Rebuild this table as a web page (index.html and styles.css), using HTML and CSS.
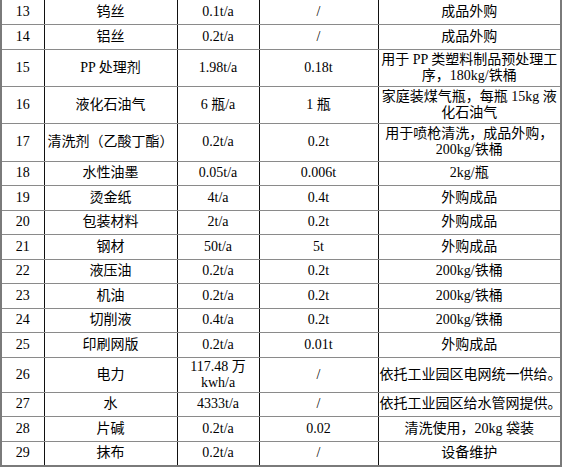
FILE: index.html
```html
<!DOCTYPE html>
<html lang="zh">
<head>
<meta charset="utf-8">
<link rel="stylesheet" href="styles.css">
</head>
<body>
<table class="tbl">
<colgroup>
<col class="c1"><col class="c2"><col class="c3"><col class="c4"><col class="c5">
</colgroup>
<tbody>
<tr class="r"><td>13</td><td>钨丝</td><td>0.1t/a</td><td>/</td><td>成品外购</td></tr>
<tr class="r"><td>14</td><td>铝丝</td><td>0.2t/a</td><td>/</td><td>成品外购</td></tr>
<tr><td>15</td><td>PP 处理剂</td><td>1.98t/a</td><td>0.18t</td><td>用于 PP 类塑料制品预处理工序，180kg/铁桶</td></tr>
<tr><td>16</td><td>液化石油气</td><td>6 瓶/a</td><td>1 瓶</td><td>家庭装煤气瓶，每瓶 15kg 液化石油气</td></tr>
<tr class="t"><td>17</td><td>清洗剂（乙酸丁酯）</td><td>0.2t/a</td><td>0.2t</td><td>用于喷枪清洗，成品外购，200kg/铁桶</td></tr>
<tr class="r"><td>18</td><td>水性油墨</td><td>0.05t/a</td><td>0.006t</td><td>2kg/瓶</td></tr>
<tr class="r"><td>19</td><td>烫金纸</td><td>4t/a</td><td>0.4t</td><td>外购成品</td></tr>
<tr class="r"><td>20</td><td>包装材料</td><td>2t/a</td><td>0.2t</td><td>外购成品</td></tr>
<tr class="r"><td>21</td><td>钢材</td><td>50t/a</td><td>5t</td><td>外购成品</td></tr>
<tr class="r"><td>22</td><td>液压油</td><td>0.2t/a</td><td>0.2t</td><td>200kg/铁桶</td></tr>
<tr class="r"><td>23</td><td>机油</td><td>0.2t/a</td><td>0.2t</td><td>200kg/铁桶</td></tr>
<tr class="r"><td>24</td><td>切削液</td><td>0.4t/a</td><td>0.2t</td><td>200kg/铁桶</td></tr>
<tr class="r"><td>25</td><td>印刷网版</td><td>0.2t/a</td><td>0.01t</td><td>外购成品</td></tr>
<tr class="p"><td>26</td><td>电力</td><td>117.48 万 kwh/a</td><td>/</td><td class="nw">依托工业园区电网统一供给。</td></tr>
<tr class="r"><td>27</td><td>水</td><td>4333t/a</td><td>/</td><td class="nw">依托工业园区给水管网提供。</td></tr>
<tr class="r"><td>28</td><td>片碱</td><td>0.2t/a</td><td>0.02</td><td>清洗使用，20kg 袋装</td></tr>
<tr class="r"><td>29</td><td>抹布</td><td>0.2t/a</td><td>/</td><td>设备维护</td></tr>
</tbody>
</table>
</body>
</html>
```

FILE: styles.css
```css
html, body {
  margin: 0;
  padding: 0;
  background: #ffffff;
}

.tbl {
  border-collapse: collapse;
  table-layout: fixed;
  width: 560px;
  font-family: "Liberation Serif", "Noto Sans CJK SC", serif;
  font-size: 14px;
  line-height: 16px;
  color: #000000;
  border-left: 2px solid #7a7a7a;
  border-right: 2px solid #7a7a7a;
  border-bottom: 2px solid #7a7a7a;
}

.c1 { width: 43px; }
.c2 { width: 133px; }
.c3 { width: 82px; }
.c4 { width: 119px; }
.c5 { width: 183px; }

.tbl td {
  text-align: center;
  vertical-align: middle;
  padding: 2px 1px;
  border-top: 1px solid #8a8a8a;
  border-bottom: 1px solid #8a8a8a;
  border-left: 1px solid #111111;
  border-right: 1px solid #111111;
}

.tbl tr:first-child td {
  border-top: none;
}

.tbl td:first-child {
  border-left: 2px solid #7a7a7a;
}

.tbl td:last-child {
  border-right: 2px solid #7a7a7a;
}

.tbl tr:last-child td {
  border-bottom: 2px solid #7a7a7a;
}

.tbl td.nw {
  white-space: nowrap;
  text-align: left;
  overflow: visible;
}

.r {
  height: 24.5px;
}

.t {
  height: 38px;
}

.p {
  height: 35px;
}

.p td {
  padding-top: 0;
  padding-bottom: 0;
}
```
